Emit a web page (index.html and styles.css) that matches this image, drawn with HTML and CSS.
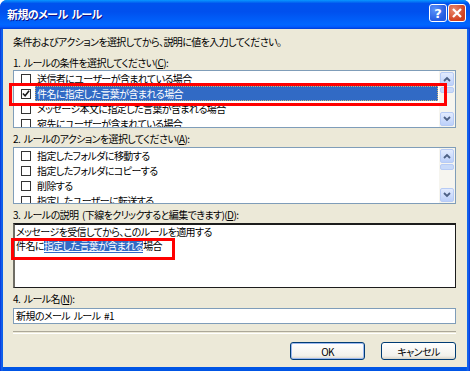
FILE: index.html
```html
<!DOCTYPE html>
<html lang="ja">
<head>
    <meta charset="UTF-8">
    <title>新規のメール ルール</title>
    <link rel="stylesheet" href="styles.css">
</head>
<body>
    <div class="window">
        <div class="titlebar">
            <span class="title">新規のメール ルール</span>
            <div class="caption-buttons">
                <span class="cap help">?</span>
                <span class="cap close">
                    <svg width="10" height="10" viewBox="0 0 10 10"><path d="M1 1L9 9M9 1L1 9" stroke="#fff" stroke-width="2.2" fill="none"/></svg>
                </span>
            </div>
        </div>

        <div class="client">
            <p class="intro">条件およびアクションを選択してから、説明に値を入力してください。</p>

            <div class="label label-1">1. ルールの条件を選択してください(<u>C</u>):</div>
            <div class="listbox list-1">
                <ul class="items">
                    <li><span class="check"></span><span class="text">送信者にユーザーが含まれている場合</span></li>
                    <li class="selected"><span class="check"><svg width="9" height="9" viewBox="0 0 9 9"><path d="M1 4.5L3.5 7L8 1.5" stroke="#1a1a1a" stroke-width="1.8" fill="none"/></svg></span><span class="text">件名に指定した言葉が含まれる場合</span></li>
                    <li><span class="check"></span><span class="text">メッセージ本文に指定した言葉が含まれる場合</span></li>
                    <li><span class="check"></span><span class="text">宛先にユーザーが含まれている場合</span></li>
                </ul>
                <div class="scrollbar">
                    <span class="arrow"><svg width="8" height="6" viewBox="0 0 8 6"><path d="M1 5L4 2L7 5" stroke="#4d6185" stroke-width="1.8" fill="none"/></svg></span>
                    <span class="thumb"></span>
                    <span class="track"></span>
                    <span class="arrow"><svg width="8" height="6" viewBox="0 0 8 6"><path d="M1 1L4 4L7 1" stroke="#4d6185" stroke-width="1.8" fill="none"/></svg></span>
                </div>
                <div class="callout callout-row"></div>
            </div>

            <div class="label label-2">2. ルールのアクションを選択してください(<u>A</u>):</div>
            <div class="listbox list-2">
                <ul class="items">
                    <li><span class="check"></span><span class="text">指定したフォルダに移動する</span></li>
                    <li><span class="check"></span><span class="text">指定したフォルダにコピーする</span></li>
                    <li><span class="check"></span><span class="text">削除する</span></li>
                    <li><span class="check"></span><span class="text">指定したユーザーに転送する</span></li>
                </ul>
                <div class="scrollbar">
                    <span class="arrow"><svg width="8" height="6" viewBox="0 0 8 6"><path d="M1 5L4 2L7 5" stroke="#4d6185" stroke-width="1.8" fill="none"/></svg></span>
                    <span class="thumb"></span>
                    <span class="track"></span>
                    <span class="arrow"><svg width="8" height="6" viewBox="0 0 8 6"><path d="M1 1L4 4L7 1" stroke="#4d6185" stroke-width="1.8" fill="none"/></svg></span>
                </div>
            </div>

            <div class="label label-3">3. ルールの説明 (下線をクリックすると編集できます)(<u>D</u>):</div>
            <div class="description">
                <div class="line">メッセージを受信してから、このルールを適用する</div>
                <div class="line">件名に<span class="link">指定した言葉が含まれる</span>場合</div>
                <div class="callout callout-desc"></div>
            </div>

            <div class="label label-4">4. ルール名(<u>N</u>):</div>
            <div class="textbox">新規のメール ルール #1</div>

            <div class="separator"></div>

            <div class="buttons">
                <span class="button default">OK</span>
                <span class="button">キャンセル</span>
            </div>
        </div>
    </div>
</body>
</html>
```

FILE: styles.css
```css
body {
    margin: 0;
    background: #ffffff;
    font-family: "Noto Sans CJK JP", sans-serif;
    font-size: 10px;
    letter-spacing: -0.6px;
    word-spacing: 2px;
    font-feature-settings: "palt";
    color: #000;
}
.window {
    width: 470px;
    height: 371px;
    box-sizing: border-box;
    padding: 0 3px 4px 3px;
    background: linear-gradient(90deg, #0831d9 0px, #166aee 2px, #0055e5 3px, #0055e5 466px, #166aee 468px, #0831d9 470px);
    border-radius: 7px 7px 0 0;
    display: flex;
    flex-direction: column;
}
.titlebar {
    height: 29px;
    margin: 0 -3px;
    padding: 0 4px 0 7px;
    border-radius: 7px 7px 0 0;
    background: linear-gradient(#0997ff 0%, #0053ee 12%, #0050ee 40%, #0066ff 85%, #005bff 92%, #003dd7 100%);
    display: flex;
    align-items: center;
    justify-content: space-between;
}
.title {
    color: #fff;
    font-weight: bold;
    font-size: 11px;
    letter-spacing: -0.6px;
    text-shadow: 1px 1px #0f1089;
    margin-top: -2px;
}
.caption-buttons {
    display: flex;
    gap: 1px;
    margin-top: -3px;
}
.cap {
    width: 18px;
    height: 18px;
    box-sizing: border-box;
    border: 1px solid #fff;
    border-radius: 3px;
    display: flex;
    align-items: center;
    justify-content: center;
    color: #fff;
    font-family: "DejaVu Sans", sans-serif;
    font-weight: bold;
    font-size: 13px;
    letter-spacing: 0;
}
.help {
    background: radial-gradient(circle at 30% 30%, #5b94fb, #2459e0 70%);
}
.close {
    background: radial-gradient(circle at 30% 30%, #e98a6e, #d1401f 70%);
}
.client {
    flex: 1;
    background: #ece9d8;
    padding: 6px 11px 0 10px;
    display: flex;
    flex-direction: column;
}
.intro {
    margin: 0;
    height: 14px;
    line-height: 14px;
}
.label {
    line-height: 15px;
    height: 15px;
}
.label-1 {
    margin-top: 6px;
}
.label-2 {
    margin-top: 3px;
    height: 16px;
    line-height: 16px;
}
.label-3 {
    margin-top: 2px;
    height: 17px;
    line-height: 17px;
}
.label-4 {
    margin-top: 2px;
    height: 18px;
    line-height: 18px;
}
.listbox {
    position: relative;
    background: #fff;
    border: 1px solid #7f9db9;
    display: flex;
}
.list-1 {
    height: 56px;
}
.list-2 {
    height: 55px;
}
.items {
    list-style: none;
    margin: 0;
    padding: 0;
    flex: 1;
    overflow: hidden;
}
.items li {
    height: 15px;
    display: flex;
    align-items: center;
}
.check {
    width: 10px;
    height: 10px;
    box-sizing: border-box;
    border: 1px solid #333;
    background: #fff;
    margin: 0 4px 0 7px;
    flex: none;
    display: flex;
    align-items: center;
    justify-content: center;
}
.text {
    flex: 1;
    height: 15px;
    line-height: 15px;
    padding-left: 2px;
    margin-right: 1px;
    white-space: nowrap;
}
.selected .text {
    background: #316ac5;
    color: #fff;
    outline: 1px dotted #c8b27a;
    outline-offset: -1px;
}
.scrollbar {
    width: 16px;
    background: #f6f5ef;
    display: flex;
    flex-direction: column;
    align-items: center;
}
.arrow {
    width: 14px;
    height: 14px;
    margin: 1px 0;
    box-sizing: border-box;
    border: 1px solid #b7cbf5;
    border-radius: 2px;
    background: linear-gradient(#e2ebfe, #bcd0fa);
    display: flex;
    align-items: center;
    justify-content: center;
}
.thumb {
    width: 14px;
    height: 6px;
    box-sizing: border-box;
    border: 1px solid #b7cbf5;
    border-radius: 2px;
    background: #c9daf9;
}
.track {
    flex: 1;
}
.callout {
    position: absolute;
    border: 3px solid #ff0000;
    box-sizing: border-box;
}
.callout-row {
    left: -5px;
    top: 12px;
    width: 438px;
    height: 23px;
}
.description {
    position: relative;
    height: 65px;
    box-sizing: border-box;
    background: #fff;
    border: 1px solid #1c1c1c;
    border-top-width: 2px;
    border-left-width: 2px;
    border-left-color: #6f6d64;
    padding: 0 1px;
}
.line {
    height: 14px;
    line-height: 14px;
    white-space: nowrap;
}
.link {
    background: #316ac5;
    color: #fff;
    text-decoration: underline;
}
.callout-desc {
    left: -4px;
    top: 13px;
    width: 164px;
    height: 22px;
}
.textbox {
    height: 16px;
    box-sizing: border-box;
    border: 1px solid #7f9db9;
    background: #fff;
    line-height: 14px;
    padding-left: 2px;
}
.separator {
    margin-top: 7px;
    height: 1px;
    border-top: 1px solid #aca899;
    border-bottom: 1px solid #fff;
}
.buttons {
    margin-top: 8px;
    display: flex;
    justify-content: flex-end;
    gap: 16px;
}
.button {
    width: 75px;
    height: 18px;
    box-sizing: border-box;
    border: 1px solid #003c74;
    border-radius: 3px;
    background: linear-gradient(#ffffff, #f2f1eb 80%, #d8d3c7);
    display: flex;
    align-items: center;
    justify-content: center;
}
.default {
    box-shadow: inset 0 0 0 1px #9cb8ef;
}
```
